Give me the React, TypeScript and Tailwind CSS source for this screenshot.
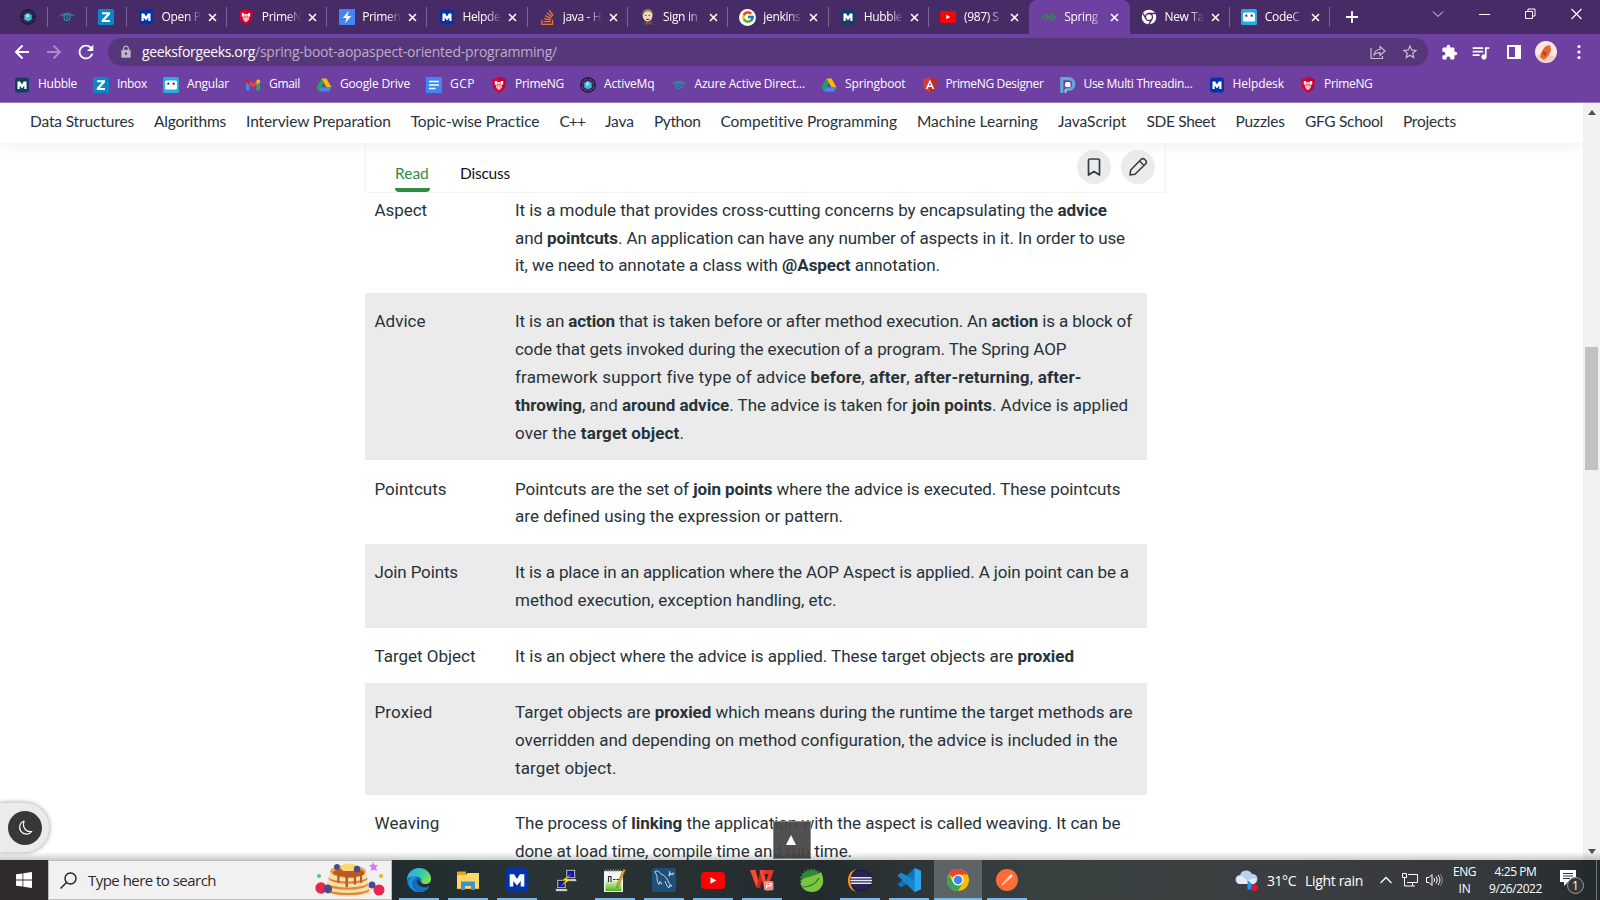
import React, { useLayoutEffect, useRef, type ReactNode } from "react";
import { FcGoogle } from "react-icons/fc";
import { SiStackoverflow } from "react-icons/si";
import { MdExtension, MdLock, MdQueueMusic, MdStarOutline, MdRefresh } from "react-icons/md";

/** Text tracked so that it fills the given advance width. */
function Fit({ w, className = "", children }: { w: number; className?: string; children: ReactNode }) {
  const ref = useRef<HTMLSpanElement>(null);
  useLayoutEffect(() => {
    const el = ref.current;
    if (!el) return;
    el.style.letterSpacing = "0px";
    const n = (el.textContent ?? "").length;
    const natural = el.getBoundingClientRect().width;
    el.style.letterSpacing = `${(w - natural) / n}px`;
  }, [w]);
  return (
    <span ref={ref} className={`inline-block whitespace-nowrap ${className}`}>
      {children}
    </span>
  );
}

/* ---------- favicons ---------- */

function IconM({ fill, size = 16 }: { fill: string; size?: number }) {
  return (
    <svg width={size} height={size} viewBox="0 0 16 16">
      <rect x="1" y="0.5" width="14" height="15" rx="3" fill={fill} />
      <path d="M3.500 12V4.500h2.700L8 7.400l1.800-2.900h2.700V12h-2.200V8.600L8 11.400 5.700 8.600V12z" fill="#fff" />
    </svg>
  );
}
const IconActive = () => (
  <svg width="16" height="16" viewBox="0 0 16 16" fill="none" stroke="#1b1530">
    <circle cx="8" cy="8" r="7.2" strokeWidth="1.2" />
    <circle cx="8" cy="8" r="5" />
    <path d="M8 0v16M0 8h16M2.500 2.500l11 11M13.500 2.500l-11 11" strokeWidth=".7" />
    <path d="M8 3.800 11.800 6v4.400L8 12.400l-3.800-2V6z" fill="#4bb8cf" stroke="#2a6c85" strokeWidth=".5" />
    <path d="M6 6l2-1 .8 2.500L7 9z" fill="#b9eef5" stroke="none" />
  </svg>
);
const IconEye = () => (
  <svg width="16" height="16" viewBox="0 0 16 16" fill="none" stroke="#1b9aa0">
    <path d="M.5 7.200C4 3.300 12 3.300 15.500 7.200M2.500 7C5 5.200 11 5.200 13.500 7" strokeWidth=".9" />
    <circle cx="8" cy="8.500" r="3" strokeWidth="1.100" />
    <circle cx="8" cy="8.500" r="1" fill="#1b9aa0" stroke="none" />
  </svg>
);
const IconZ = () => (
  <svg width="16" height="16" viewBox="0 0 16 16">
    <rect width="16" height="16" rx="1.500" fill="#0a87c4" />
    <path d="M4 3.200h8v2L6.900 11H12v2H3.800v-2L9 5.200H4z" fill="#fff" />
  </svg>
);
const IconShield = () => (
  <svg width="16" height="16" viewBox="0 0 16 16">
    <path d="M8 0l6.800 2.300-1 9L8 16l-5.800-4.700-1-9z" fill="#dd0031" />
    <path d="M8 0l6.800 2.300-1 9L8 16z" fill="#c3002f" />
    <path d="M3.800 4h2l.7 1h3l.7-1h2v3.500l-1.500 1v2.300L9 12.800H7l-1.700-2V8.500l-1.500-1z" fill="#fff" />
    <path d="M6.900 5v7.500M9.100 5v7.500M4 7.900h8" stroke="#d0102f" strokeWidth=".6" />
  </svg>
);
const IconBolt = () => (
  <svg width="16" height="16" viewBox="0 0 16 16">
    <rect width="16" height="16" rx="1" fill="#4285f4" />
    <path d="M9.800 1.800 3.800 9H7.500L6.200 14.200 12.300 7H8.500z" fill="#fff" />
  </svg>
);
const IconStack = () => <SiStackoverflow size={15} color="#e8762c" />;
const IconJenkins = () => (
  <svg width="16" height="16" viewBox="0 0 16 16">
    <path d="M2.500 16c0-3 1.500-4.500 3-4.500h5c2 0 3.500 2 3.500 4.500z" fill="#3d4a55" />
    <ellipse cx="7.600" cy="6.600" rx="4.900" ry="6" fill="#efd9b8" />
    <path d="M2.600 8C1.500 2 5 .3 8 .3c4 .2 5.500 2.700 4.700 7.200C12 4 10.800 2.200 8 2.200 5 2.200 3.600 4 2.600 8z" fill="#8f8468" />
    <path d="M5 6.500h1.500M8.500 6.500H10M6 10c1 .8 2.500.8 3.500 0" stroke="#3b2b20" strokeWidth=".8" />
    <path d="m6 13 2.500 1L11 12.800v2.600l-2.500-.8L6 15.600z" fill="#d33833" />
  </svg>
);
const IconTube = ({ w = 16, h = 12 }: { w?: number; h?: number }) => (
  <svg width={w} height={h} viewBox="0 0 16 12" preserveAspectRatio="none">
    <rect width="16" height="12" rx="2.500" fill="#f00" />
    <path d="M6.300 3.700v4.600L10.300 6z" fill="#fff" />
  </svg>
);
const IconGoogle = () => (
  <div className="flex size-[17px] items-center justify-center rounded-full bg-white">
    <FcGoogle size={14} />
  </div>
);
const IconGfg = () => (
  <svg width="16" height="16" viewBox="0 0 16 16" fill="none" stroke="#2f8d46" strokeWidth="1.200">
    <path d="M2 5.800c3-.8 5 .3 5 2.200s-1.200 2.800-2.800 2.800S1.500 9.800 1.500 8H14.500c0 1.800-1.100 2.800-2.700 2.800S9 9.900 9 8s2-3 5-2.200" />
  </svg>
);
const IconChromeMono = () => (
  <svg width="16" height="16" viewBox="0 0 16 16">
    <circle cx="8" cy="8" r="7.300" fill="#fff" />
    <circle cx="8" cy="8" r="3.500" fill="#fff" stroke="#472b66" strokeWidth="1.300" />
    <path d="M8 4.500h6.500M5 9.800 1.800 4.200M11 9.800 7.800 15.300" stroke="#472b66" strokeWidth="1.300" />
  </svg>
);
const IconRobot = () => (
  <svg width="16" height="16" viewBox="0 0 16 16">
    <rect width="16" height="16" rx="1.500" fill="#29abe2" />
    <rect x="2" y="3.500" width="12" height="9" rx="1.500" fill="#fff" />
    <path d="M4.300 7.200 5.300 5.600 6.300 7.200zM9.700 7.200l1-1.600 1 1.600z" fill="#222" stroke="#222" strokeWidth=".6" />
  </svg>
);
const IconGmail = () => (
  <svg width="16" height="16" viewBox="0 0 16 16">
    <path d="M1 3.500 4.500 6v7.500H2a1 1 0 0 1-1-1z" fill="#4285f4" />
    <path d="M15 3.500 11.500 6v7.500H14a1 1 0 0 0 1-1z" fill="#34a853" />
    <path d="M4.500 3.800 8 6.500l3.500-2.700v4L8 10.500 4.500 7.800z" fill="#ea4335" />
    <path d="M1 4c0-1.600 1.700-2 2.700-1.200l.8.7v4.300L1 5.300z" fill="#c5221f" />
    <path d="M15 4c0-1.600-1.700-2-2.700-1.200l-.8.700v4.300L15 5.300z" fill="#fbbc04" />
  </svg>
);
const IconDrive = () => (
  <svg width="16" height="16" viewBox="0 0 16 16">
    <path d="M5.500 1.500 8 5.800 3 14.500.5 10.200z" fill="#1ea362" />
    <path d="M5.500 1.500h5l5 8.700h-5z" fill="#ffba00" />
    <path d="M5.500 10.200h10L13 14.500H3z" fill="#4688f4" />
  </svg>
);
const IconDoc = () => (
  <svg width="16" height="16" viewBox="0 0 16 16">
    <rect width="16" height="16" rx="1" fill="#4285f4" />
    <path d="M3 4.500h10M3 8h10M3 11.500h6.500" stroke="#fff" strokeWidth="1.600" />
  </svg>
);
const IconAngular = () => (
  <svg width="16" height="16" viewBox="0 0 16 16">
    <path d="M8 0l7.200 2.500-1.100 9.600L8 16l-6.100-3.900L.8 2.500z" fill="#d93a3a" />
    <path d="M8 0l7.200 2.500-1.100 9.600L8 16z" fill="#b52e31" />
    <path d="m8 2.500 4.300 9.600h-1.700l-.9-2.200H6.300l-.9 2.200H3.700zM8 5.700 6.900 8.500h2.200z" fill="#fff" />
  </svg>
);
const IconP = () => (
  <svg width="16" height="16" viewBox="0 0 16 16">
    <path d="M1.800 16V1.700h6.700a5.300 5.300 0 0 1 0 10.600H6" fill="none" stroke="#62a8dc" strokeWidth="3.200" />
    <rect x="5" y="5" width="5.500" height="5" rx="1.500" fill="#fff" />
    <path d="M5.500 12v4" stroke="#8fc6ec" strokeWidth="2" />
  </svg>
);

const pinned = [<IconActive key="a" />, <IconEye key="e" />, <IconZ key="z" />];

const tabs: { icon: ReactNode; title: string; active?: boolean; sep?: boolean }[] = [
  { icon: <IconM fill="#0633a8" />, title: "Open P", sep: true },
  { icon: <IconShield />, title: "PrimeN", sep: true },
  { icon: <IconBolt />, title: "Primen", sep: true },
  { icon: <IconM fill="#0633a8" />, title: "Helpde", sep: true },
  { icon: <IconStack />, title: "java - H", sep: true },
  { icon: <IconJenkins />, title: "Sign in", sep: true },
  { icon: <IconGoogle />, title: "jenkins", sep: true },
  { icon: <IconM fill="#123f66" />, title: "Hubble", sep: true },
  { icon: <IconTube />, title: "(987) S" },
  { icon: <IconGfg />, title: "Spring", active: true },
  { icon: <IconChromeMono />, title: "New Ta", sep: true },
  { icon: <IconRobot />, title: "CodeC", sep: true },
];

const bookmarks: [ReactNode, string, number][] = [
  [<IconM fill="#123f66" />, "Hubble", 39],
  [<IconZ />, "Inbox", 30],
  [<IconRobot />, "Angular", 42],
  [<IconGmail />, "Gmail", 31],
  [<IconDrive />, "Google Drive", 70],
  [<IconDoc />, "GCP", 25],
  [<IconShield />, "PrimeNG", 49],
  [<IconActive />, "ActiveMq", 50.5],
  [<IconEye />, "Azure Active Direct...", 110.5],
  [<IconDrive />, "Springboot", 60.5],
  [<IconAngular />, "PrimeNG Designer", 98],
  [<IconP />, "Use Multi Threadin...", 109],
  [<IconM fill="#0633a8" />, "Helpdesk", 51.5],
  [<IconShield />, "PrimeNG", 48.5],
];

function TabStrip() {
  return (
    <div className="flex h-[34px] shrink-0 items-center bg-[#472b66] pl-[9px]">
      {pinned.map((icon, i) => (
        <div key={i} className="flex h-full w-[39.200px] items-center">
          <div className="flex flex-1 justify-center">{icon}</div>
          <div className="h-5 w-px bg-[#7d6696]" />
        </div>
      ))}
      {tabs.map((t) => (
        <div
          key={t.title}
          className={`flex h-full w-[100.300px] items-center pl-[11px] ${t.active ? "rounded-t-lg bg-[#6e40a1]" : ""}`}
        >
          <div className="flex w-[17px] justify-center">{t.icon}</div>
          <div className="ml-[7px] w-[41px] text-[12px] tracking-[-0.350px] whitespace-nowrap text-white [mask-image:linear-gradient(to_right,#000_60%,transparent_96%)]">
            {t.title}
          </div>
          <svg className="ml-[5px] shrink-0" width="9" height="9" viewBox="0 0 9 9">
            <path d="M1 1l7 7M8 1 1 8" stroke="#fff" strokeWidth="1.600" />
          </svg>
          {t.sep && <div className="ml-auto h-5 w-px bg-[#7d6696]" />}
        </div>
      ))}
      <svg className="ml-4" width="12" height="12" viewBox="0 0 12 12">
        <path d="M6 0v12M0 6h12" stroke="#fff" strokeWidth="1.800" />
      </svg>
      <div className="ml-auto flex items-center gap-[35px] pr-[18px] pb-[6px]">
        <svg width="12" height="12" viewBox="0 0 12 12" fill="none" stroke="#e8e2ef">
          <path d="m1 3.500 5 5 5-5" />
        </svg>
        <svg width="11" height="12" viewBox="0 0 11 12" stroke="#fff">
          <path d="M0 6.500h11" />
        </svg>
        <svg width="11" height="12" viewBox="0 0 11 12" fill="none" stroke="#fff">
          <path d="M.5 3.500h7v7h-7zM3 3V1h7v7H8" />
        </svg>
        <svg width="11" height="12" viewBox="0 0 11 12" stroke="#fff" strokeWidth="1.100">
          <path d="m.5 1 10 10M10.500 1l-10 10" />
        </svg>
      </div>
    </div>
  );
}

function Toolbar() {
  return (
    <div className="flex h-[36px] shrink-0 items-center bg-[#6e40a1] pr-[15px] pl-[14px] text-white">
      <svg width="16" height="16" viewBox="0 0 16 16" fill="none" stroke="#fff" strokeWidth="2">
        <path d="M15 8H2.500M8.500 1.500 2 8l6.500 6.500" />
      </svg>
      <svg className="ml-4" width="16" height="16" viewBox="0 0 16 16" fill="none" stroke="#ab8cc8" strokeWidth="1.800">
        <path d="M1 8h12.500M7.500 1.500 14 8l-6.500 6.500" />
      </svg>
      <MdRefresh className="ml-[13px]" size={22} />
      <div className="ml-[11px] flex h-7 w-[1320px] items-center rounded-full bg-[#55377a] pr-[9px] pl-[11px]">
        <MdLock size={14} color="#bfb6c9" />
        <div className="ml-[9px] flex text-[14px] leading-none">
          <Fit w={113}>geeksforgeeks.org</Fit>
          <Fit w={302} className="text-[#bbaecb]">/spring-boot-aopaspect-oriented-programming/</Fit>
        </div>
        <svg className="ml-auto" width="16" height="16" viewBox="0 0 16 16" fill="none" stroke="#c6bdd1" strokeWidth="1.200">
          <path d="M1 4v10.500h11.500V12M4 11c.5-4 3-5.500 6-5.500V2.500L15 7l-5 4.500V8.600C7.500 8.500 5.500 9 4 11z" />
        </svg>
        <MdStarOutline className="ml-[15px]" size={18} color="#c6bdd1" />
      </div>
      <MdExtension className="ml-[13px]" size={17} />
      <MdQueueMusic className="ml-[12px]" size={21} />
      <svg className="ml-[16px]" width="14" height="14" viewBox="0 0 14 14">
        <path d="M1 1h12v12H1z" fill="none" stroke="#fff" strokeWidth="2" />
        <path d="M8 0h6v14H8z" fill="#fff" />
      </svg>
      <svg className="ml-[14px]" width="22" height="22" viewBox="0 0 22 22">
        <circle cx="11" cy="11" r="11" fill="#fbe6e0" />
        <path d="M1 15q6-3 12-1t8 0a11 11 0 0 1-20 1z" fill="#f6cdc0" />
        <path d="m6 12 3-5 2-2 4-1 1 5-2 5-3 3-2 2-4-3z" fill="#e8662a" />
        <path d="m8 10 3.500 3M7.500 12l3 2.500" stroke="#a3400f" strokeWidth="1.100" />
      </svg>
      <svg className="ml-auto" width="12" height="16" viewBox="0 0 12 16" fill="#fff">
        <circle cx="6" cy="2.500" r="1.600" />
        <circle cx="6" cy="8" r="1.600" />
        <circle cx="6" cy="13.500" r="1.600" />
      </svg>
    </div>
  );
}

function Bookmarks() {
  return (
    <div className="flex h-[33px] shrink-0 items-center gap-4 border-b border-[#9a7cbd] bg-[#6e40a1] pb-[3px] pl-[14px] text-[12px] text-white">
      {bookmarks.map(([icon, label, w], i) => (
        <div key={i} className="flex items-center gap-2">
          <div className="w-4">{icon}</div>
          <Fit w={w} className="leading-4 mb-px">{label}</Fit>
        </div>
      ))}
    </div>
  );
}

/* ---------- page ---------- */

const navItems: [string, number][] = [
  ["Data Structures", 104],
  ["Algorithms", 72],
  ["Interview Preparation", 145],
  ["Topic-wise Practice", 129],
  ["C++", 25.5],
  ["Java", 29],
  ["Python", 46.5],
  ["Competitive Programming", 177],
  ["Machine Learning", 121],
  ["JavaScript", 68.5],
  ["SDE Sheet", 69],
  ["Puzzles", 49.5],
  ["GFG School", 78],
  ["Projects", 53],
];

const B = ({ children }: { children: ReactNode }) => <strong className="font-bold">{children}</strong>;

const rows: { term: string; tw: number; lines: [ReactNode, number][] }[] = [
  {
    term: "Aspect",
    tw: 52.5,
    lines: [
      [<>It is a module that provides cross-cutting concerns by encapsulating the <B>advice</B></>, 592],
      [<>and <B>pointcuts</B>. An application can have any number of aspects in it. In order to use</>, 610],
      [<>it, we need to annotate a class with <B>@Aspect</B> annotation.</>, 425],
    ],
  },
  {
    term: "Advice",
    tw: 51,
    lines: [
      [<>It is an <B>action</B> that is taken before or after method execution. An <B>action</B> is a block of</>, 617],
      [<>code that gets invoked during the execution of a program. The Spring AOP</>, 551.5],
      [<>framework support five type of advice <B>before</B>, <B>after</B>, <B>after-returning</B>, <B>after-</B></>, 566],
      [<><B>throwing</B>, and <B>around advice</B>. The advice is taken for <B>join points</B>. Advice is applied</>, 613],
      [<>over the <B>target object</B>.</>, 169],
    ],
  },
  {
    term: "Pointcuts",
    tw: 72,
    lines: [
      [<>Pointcuts are the set of <B>join points</B> where the advice is executed. These pointcuts</>, 605.5],
      [<>are defined using the expression or pattern.</>, 327.5],
    ],
  },
  {
    term: "Join Points",
    tw: 83.5,
    lines: [
      [<>It is a place in an application where the AOP Aspect is applied. A join point can be a</>, 614],
      [<>method execution, exception handling, etc.</>, 321.5],
    ],
  },
  {
    term: "Target Object",
    tw: 101,
    lines: [[<>It is an object where the advice is applied. These target objects are <B>proxied</B></>, 559]],
  },
  {
    term: "Proxied",
    tw: 58,
    lines: [
      [<>Target objects are <B>proxied</B> which means during the runtime the target methods are</>, 617.5],
      [<>overridden and depending on method configuration, the advice is included in the</>, 602],
      [<>target object.</>, 101.5],
    ],
  },
  {
    term: "Weaving",
    tw: 65,
    lines: [
      [<>The process of <B>linking</B> the application with the aspect is called weaving. It can be</>, 605.5],
      [<>done at load time, compile time and run time.</>, 337],
    ],
  },
];

function Article() {
  return (
    <div className="relative flex min-h-0 flex-1 bg-white">
      <main className="min-w-0 flex-1 overflow-hidden text-[#273239]">
        <nav className="relative flex h-10 items-center gap-5 bg-white pb-[2px] pl-[30px] font-['Lato',sans-serif] text-[15.500px] shadow-[0_4px_14px_rgba(0,0,0,0.06)]">
          {navItems.map(([label, w]) => (
            <Fit key={label} w={w}>{label}</Fit>
          ))}
        </nav>
        <div className="ml-[365px] flex h-[50px] w-[801px] justify-between border-x border-b border-[#f3f3f3] pr-[10px] pl-[29px] font-['Lato',sans-serif] text-[15.500px]">
          <div className="flex items-end gap-[30px]">
            <div className="flex h-[31px] flex-col justify-between text-[#2f8d46]">
              <Fit w={35} className="leading-[24px]">Read</Fit>
              <div className="h-1 w-[35px] rounded-b bg-[#2f8d46]" />
            </div>
            <div className="flex h-[31px] flex-col text-[#111]">
              <Fit w={50} className="leading-[24px]">Discuss</Fit>
            </div>
          </div>
          <div className="flex gap-[10px] pt-[7px]">
            <div className="flex size-[34px] items-center justify-center rounded-full bg-[#ebebeb]">
              <svg width="14" height="18" viewBox="0 0 14 18" fill="none" stroke="#333c42" strokeWidth="1.700">
                <path d="M1.500 17V2.500a1.500 1.500 0 0 1 1.500-1.500h8a1.500 1.500 0 0 1 1.500 1.500V17L7 13.500z" strokeLinejoin="round" />
              </svg>
            </div>
            <div className="flex size-[34px] items-center justify-center rounded-full bg-[#ebebeb]">
              <svg width="20" height="20" viewBox="0 0 20 20" fill="none" stroke="#333c42" strokeWidth="1.600" strokeLinejoin="round">
                <path d="M2 18l.7-5L13.200 2.300a2.300 2.300 0 0 1 3.300 0l1.200 1.200a2.300 2.300 0 0 1 0 3.300L7 17.300zM11.500 4l4.500 4.500" />
              </svg>
            </div>
          </div>
        </div>
        <div className="ml-[365px] w-[782px] pt-[3.700px] font-['Roboto',sans-serif] text-[17px] leading-[27.900px]">
          {rows.map((r, i) => (
            <div
              key={r.term}
              className={`flex pb-[12.600px] pl-[9.500px] ${i > 0 ? "pt-[15.300px]" : ""} ${i % 2 ? "bg-[#ebebeb]" : ""}`}
            >
              <div className="w-[140.500px] shrink-0">
                <Fit w={r.tw}>{r.term}</Fit>
              </div>
              <div>
                {r.lines.map(([text, w], j) => (
                  <div key={j} className="h-[27.900px]">
                    <Fit w={w}>{text}</Fit>
                  </div>
                ))}
              </div>
            </div>
          ))}
        </div>
      </main>
      <div className="flex w-[17px] shrink-0 flex-col items-center justify-between bg-[#f1f1f1] pt-[7px] pb-[6px]">
        <svg width="8" height="5" viewBox="0 0 8 5"><path d="M0 5 4 0l4 5z" fill="#505050" /></svg>
        <div className="mb-[379px] mt-auto h-[123px] w-[13px] bg-[#c1c1c1]" />
        <svg width="8" height="5" viewBox="0 0 8 5"><path d="M0 0h8L4 5z" fill="#505050" /></svg>
      </div>
      <div className="absolute bottom-[7px] left-0 flex h-[51px] w-[49.500px] items-center rounded-r-full border border-l-0 border-[#d6d6d6] bg-[#ebebeb] pl-[7.500px] shadow-[0_0_4px_rgba(0,0,0,0.3)]">
        <div className="flex size-[34px] items-center justify-center rounded-full bg-[#38383a]">
          <svg width="16" height="16" viewBox="0 0 16 16" fill="none" stroke="#fff" strokeWidth="1.200" strokeLinejoin="round">
            <path d="M7 1A6.800 6.800 0 1 0 14.800 11.500C9.500 12.500 5 8 7 1z" />
          </svg>
        </div>
      </div>
      <div className="absolute bottom-px left-[773px] flex h-[38px] w-[38px] items-center justify-center border border-[#8a8a8a] bg-[#484848]/95">
        <svg className="mr-[2px]" width="10" height="10" viewBox="0 0 10 10"><path d="M0 10 5 0l5 10z" fill="#fff" /></svg>
      </div>
      <div className="absolute bottom-0 left-0 h-[8px] w-full bg-gradient-to-t from-black/20 to-transparent" />
    </div>
  );
}

/* ---------- taskbar ---------- */

const Edge = () => (
  <svg width="24" height="24" viewBox="0 0 24 24">
    <defs>
      <linearGradient id="edgeTop" x1="0" x2="1" y1="0" y2=".5">
        <stop offset="0" stopColor="#2aa5e0" />
        <stop offset=".6" stopColor="#35c9b6" />
        <stop offset="1" stopColor="#7be04a" />
      </linearGradient>
    </defs>
    <circle cx="12" cy="12" r="12" fill="#0f6cbd" />
    <path d="M0 12C0 5 5.500 0 12 0s12 5 12 10.500c0 4-3 6-6 6-2.500 0-4-1-4-2.500 1-1 1-5-3.500-5.500C6 8 1 9 0 12z" fill="url(#edgeTop)" />
    <path d="M10 9c-3 2-3.500 6-1 9 3 3.500 8.500 4 13 1-2 3.500-6.500 5.500-11 5C6 23.500 2 19 1.500 15 1 11 5 8 10 9z" fill="#1b8fe0" />
    <path d="M10.500 11c-1.500 3 .5 7 5 8 3 .7 5.500 0 7.500-1.500l2 2-1-5.500c-2 2.500-9 3-10 0z" fill="#232e31" />
    <path d="M9 10c-2.500 2.500-2 7 1 9.500 3.500 2.700 8.500 2.500 12.500-.5-3 5-9 6-13 4C4 20 4 12 9 10z" fill="#1468b8" />
  </svg>
);
const Explorer = () => (
  <svg width="22" height="19" viewBox="0 0 22 19">
    <path d="M0 1.500A1 1 0 0 1 1 .5h8V3h13v15H0z" fill="#e9a41c" />
    <path d="M0 4h9l1.500-2H22v15.500H0z" fill="#ffd765" />
    <path d="M4 19v-8.500h14V19h-4v-4H8v4z" fill="#3b93d6" />
  </svg>
);
const Putty = () => (
  <svg width="22" height="23" viewBox="0 0 22 23">
    <path d="M11 .5h9.500v9H11zM9.500 9.500H21l1 3H9zM2 10.500h9v9H2zM.5 19.500H12l1 3H.500z" fill="#cfcfcf" stroke="#111" strokeWidth=".5" />
    <path d="M12.500 2h6.500v6h-6.500zM3.500 12H9.500v6h-6z" fill="#0a12e0" stroke="#111" strokeWidth=".5" />
    <path d="m16 5-9 6.500h4L6 17l10-7h-4.500z" fill="#ffef1a" stroke="#6b6400" strokeWidth=".3" />
  </svg>
);
const Notepad = () => (
  <svg width="24" height="25" viewBox="0 0 24 25">
    <defs>
      <linearGradient id="noteGreen" x1="0" x2="0" y1="0" y2="1">
        <stop offset="0" stopColor="#e9f6d5" />
        <stop offset="1" stopColor="#4fb41a" />
      </linearGradient>
    </defs>
    <path d="M1 3h19v21H1z" fill="#f5f5f5" />
    <path d="M2.500 12h16v11h-16z" fill="url(#noteGreen)" />
    <path d="M2 2.500h16" stroke="#888" strokeWidth="2" strokeDasharray="1.500 1" />
    <path d="M5.500 8v6M5.500 8.500h2.500V14M10 11.500h2.500M13.500 11.500h2.500" stroke="#333" strokeWidth="1.200" fill="none" />
    <path d="M22.500 2 16 17l-2 3 .2-4.500L20.500 1z" fill="#e7a92f" stroke="#7c5310" strokeWidth=".5" />
  </svg>
);
const Workbench = () => (
  <div className="flex size-6 items-center justify-center overflow-hidden rounded-[3px] bg-[#1f4f7a]">
    <svg width="24" height="24" viewBox="0 0 24 24" fill="none" stroke="#dbe7f0" strokeWidth=".9">
      <path d="M3 3.500c2.500-1.200 4.500.2 6 2.500 4 1.500 7 5 8 9.500l3 2.500-2.500-.3-.5 2.300c-1.500-1-3-4-4-7" />
      <path d="M3 3.500c.5 2 2 3.500 2 6 0 3 .5 5 2 7l1-3 2 3" />
      <path d="m16.500 8 2.500-2.500M17.500 3.300l.2 2.500 2.700.7 1.300-1.700" stroke="#b9cbdb" strokeWidth="1.500" />
    </svg>
  </div>
);
const Wps = () => (
  <svg width="24" height="22" viewBox="0 0 24 22">
    <path d="M0 1h5.500L10 18.500H6.500z" fill="#ff4a35" />
    <path d="M6.500 18.500 10.500 1h4L10 18.500z" fill="#d42318" />
    <path d="M9.500 1h4l2.500 12-2 5.500z" fill="#ff4a35" />
    <path d="M14 18.500 18.500 5H13l1-4h10l-6.500 17.500z" fill="#ee3124" />
    <rect x="14" y="12" width="9.500" height="9.500" rx="2" fill="#ee8a88" />
    <path d="M16.500 14.500h4.500v2.300h-4.500v2.500" stroke="#fff" strokeWidth="1.200" fill="none" />
  </svg>
);
const Spring = () => (
  <svg width="25" height="25" viewBox="0 0 25 25">
    <circle cx="12.500" cy="12.500" r="10.500" fill="#2f8a33" stroke="#2f8a33" strokeWidth="2.600" strokeDasharray="1.700 1.500" />
    <path d="M2 16C2 7 12 11 22 4c4 8 2.500 17-6 19.500C10 25 3 22 2 16z" fill="#7cc444" />
    <path d="M3.500 19c7 0 13-2.500 16.500-9" stroke="#2f7420" strokeWidth="1.200" fill="none" />
  </svg>
);
const Eclipse = () => (
  <svg width="24" height="23" viewBox="0 0 24 23">
    <path d="M8 0C2 2 0 7 0 11.500S2 21 8 23C4 20 2.500 16 2.500 11.500S4 3 8 0z" fill="#f7941e" />
    <circle cx="13" cy="11.500" r="10.300" fill="#2c2255" stroke="#1b1638" />
    <path d="M2.800 8.700h20.700M2.500 11.500h21.500M2.800 14.300h20.700" stroke="#e9e6f3" strokeWidth="1.500" />
  </svg>
);
const VsCode = () => (
  <svg width="24" height="24" viewBox="0 0 24 24">
    <path d="M17.500 0 24 3v5L4 19.500 0.500 16.500z" fill="#0d72b8" />
    <path d="M17.500 24 24 21v-5L4 4.500.5 7.500z" fill="#1588cf" />
    <path d="M17.500 0 24 2.800v18.400L17.500 24z" fill="#2ba6ef" />
  </svg>
);
const Chrome = () => (
  <svg width="22" height="22" viewBox="0 0 22 22">
    <circle cx="11" cy="11" r="11" fill="#fbbc05" />
    <path d="M11 11 1.500 5.500A11 11 0 0 1 20.500 5.500H11z" fill="#ea4335" />
    <path d="M1.500 5.500A11 11 0 0 0 11 22l4.800-8.300L11 11 6.200 13.700z" fill="#34a853" />
    <circle cx="11" cy="11" r="5.500" fill="#fff" />
    <circle cx="11" cy="11" r="4.300" fill="#4285f4" />
  </svg>
);
const Postman = () => (
  <svg width="22" height="22" viewBox="0 0 22 22">
    <circle cx="11" cy="11" r="11" fill="#ff6c37" />
    <path d="M5 17l2-3 7-8c1.500-1.500 3.500.3 2 2l-7 6z" fill="#fff" />
    <path d="m8 14 6-6" stroke="#ff6c37" strokeWidth=".6" />
  </svg>
);

const apps: { el: ReactNode; open: boolean; active?: boolean }[] = [
  { el: <Edge />, open: true },
  { el: <Explorer />, open: true },
  { el: <IconM fill="#0633a8" size={26} />, open: true },
  { el: <Putty />, open: false },
  { el: <Notepad />, open: true },
  { el: <Workbench />, open: true },
  { el: <IconTube w={24} h={17} />, open: true },
  { el: <Wps />, open: true },
  { el: <Spring />, open: false },
  { el: <Eclipse />, open: true },
  { el: <VsCode />, open: true },
  { el: <Chrome />, open: true, active: true },
  { el: <Postman />, open: true },
];

const Pancakes = () => (
  <svg width="70" height="36" viewBox="0 0 70 36">
    <ellipse cx="34" cy="30" rx="23" ry="5" fill="#f6e3c8" />
    <ellipse cx="33" cy="28" rx="21.500" ry="5.200" fill="#d98a3d" />
    <ellipse cx="33" cy="26" rx="21.500" ry="5" fill="#fbdfa8" />
    <ellipse cx="32.500" cy="22.500" rx="20.500" ry="5.200" fill="#d98a3d" />
    <ellipse cx="32.500" cy="20.500" rx="20.500" ry="5" fill="#fbdfa8" />
    <ellipse cx="33" cy="16.500" rx="19.500" ry="5.200" fill="#d98a3d" />
    <ellipse cx="33" cy="14.500" rx="19.500" ry="5" fill="#fbdfa8" />
    <ellipse cx="33" cy="9.500" rx="18" ry="6.500" fill="#e8a552" />
    <path d="M18 10c4-4 26-5 31 0 1 2-1 3-2 4v6c-.7 1.500-2 1-2-.5V14l-4 1v7c-.7 1.500-2.200 1-2.200-.5V15.500H33v9c-.7 1.500-2.500 1-2.500-.5v-9l-6-1v6c-.7 1.500-2.200 1-2.200-.5v-6c-3-1-5-2-4.300-3.500z" fill="#b8591f" />
    <path d="M25 5c3-4 14-5 18 0l-5 4H28z" fill="#ffd76e" />
    <circle cx="22" cy="5" r="3" fill="#4a4a8c" />
    <circle cx="42" cy="7" r="3.200" fill="#4a4a8c" />
    <circle cx="6" cy="26" r="5.700" fill="#e3274f" />
    <circle cx="13" cy="27" r="4.200" fill="#4a4a8c" />
    <circle cx="57" cy="23" r="3.500" fill="#4a4a8c" />
    <circle cx="64" cy="28" r="5.500" fill="#e3274f" />
    <circle cx="4" cy="14" r="2.100" fill="#4fd06f" />
    <circle cx="66" cy="14" r="2.100" fill="#fbb216" />
    <path d="m58 0 1.500 3L63 3l-2 2.500 1 3.500-3-1.500L56 9l.3-3.500L54 3l3-.3z" fill="#d278ff" />
  </svg>
);

function Taskbar() {
  return (
    <div className="flex h-10 shrink-0 bg-[linear-gradient(to_right,#302a2b_0px,#302a2b_48px,#202c2e_391px,#2b3435_560px,#232b2e_820px,#394140_1030px,#3b3e40_1300px,#35393c_1480px,#22292c_1600px)] font-['Open_Sans','Noto_Sans',sans-serif] text-white">
      <div className="flex w-12 items-center justify-center">
        <svg width="16" height="16" viewBox="0 0 16 16" fill="#fff">
          <path d="M0 2.300 6.500 1.400V7.600H0zM7.300 1.300 16 0v7.600H7.300zM0 8.400h6.500v6.200L0 13.700zM7.300 8.400H16V16l-8.700-1.300z" />
        </svg>
      </div>
      <div className="flex w-[344px] items-center border border-[#bcbcbc] bg-[#f1f1f1] pr-[6px] pl-[11px]">
        <svg width="17" height="17" viewBox="0 0 17 17" fill="none" stroke="#222" strokeWidth="1.400">
          <circle cx="10.500" cy="6.500" r="5.500" />
          <path d="m6.500 10.500-6 6" />
        </svg>
        <Fit w={128} className="ml-[11px] text-[15px] leading-none text-[#2b2b2b]">Type here to search</Fit>
        <div className="ml-auto"><Pancakes /></div>
      </div>
      <div className="ml-[3px] flex gap-px">
        {apps.map((a, i) => (
          <div key={i} className={`flex w-12 flex-col items-center ${a.active ? "bg-[#5e6466]" : ""}`}>
            <div className="flex h-[38px] items-center pt-[2px]">{a.el}</div>
            {a.open && <div className={`h-[2px] bg-[#76b9ed] ${a.active ? "w-12" : "w-10"}`} />}
          </div>
        ))}
      </div>
      <div className="ml-auto flex items-center">
        <svg width="24" height="22" viewBox="0 0 24 22">
          <path d="M5 15a4.500 4.500 0 0 1 0-9 6.500 6.500 0 0 1 12-1 5 5 0 0 1 1 10z" fill="#b9d0f0" />
          <path d="M5 15a4 4 0 0 1 1-8c3 0 4 4 7 4s5-3 8-1c0 3-1.500 5-3 5z" fill="#e3ecfa" />
          <path d="M12.500 11c2.500 2 5 4 5 6.500s-2 3-5 3z" fill="#1f9de8" />
          <circle cx="19.500" cy="18.500" r="3.500" fill="#dc143c" />
        </svg>
        <Fit w={29} className="ml-[8px] text-[14px]">31°C</Fit>
        <Fit w={58} className="ml-[9px] text-[14px]">Light rain</Fit>
        <svg className="ml-[17px]" width="12" height="8" viewBox="0 0 12 8" fill="none" stroke="#fff" strokeWidth="1.300">
          <path d="m.5 7 5.500-5.500L11.500 7" />
        </svg>
        <svg className="ml-[10px]" width="16" height="14" viewBox="0 0 16 14" fill="none" stroke="#fff">
          <path d="M6 1.500h9.500v8H5M10.500 9.500V13M5 13h8M.5.500h4v4h-4zM2.500 4.500V13H5" />
        </svg>
        <svg className="ml-[8px]" width="17" height="14" viewBox="0 0 17 14" fill="none" stroke="#fff">
          <path d="M.5 4.500H3L6 1.500v11L3 9.500H.5zM8 5q1.500 2 0 4M10 3.500q3 3.500 0 7" />
          <path d="M12 2q4 5 0 10" stroke="#fff" />
          <path d="M14 1q5 6 0 12" stroke="#888" />
        </svg>
        <div className="ml-[10px] flex w-[23px] flex-col items-center gap-[5px] text-[12px] leading-[12px]">
          <Fit w={23}>ENG</Fit>
          <Fit w={12}>IN</Fit>
        </div>
        <div className="ml-[13px] flex w-[53px] flex-col items-center gap-[5px] text-[12px] leading-[12px]">
          <Fit w={42}>4:25 PM</Fit>
          <Fit w={53}>9/26/2022</Fit>
        </div>
        <svg className="mt-[4px] ml-[17px]" width="26" height="26" viewBox="0 0 26 26">
          <path d="M1 1h16v12H9l-4 4v-4H1z" fill="#fff" />
          <path d="M4 4.500h10M4 7h10M4 9.500h7" stroke="#333" />
          <circle cx="16.500" cy="16.500" r="8" fill="#33383a" stroke="#9a9a9a" />
          <text x="16.500" y="21" textAnchor="middle" fontSize="12" fill="#fff">1</text>
        </svg>
        <div className="mr-[3px] ml-[11px] h-10 w-px bg-[#777]" />
      </div>
    </div>
  );
}

export default function App() {
  return (
    <div className="flex h-[900px] w-[1600px] flex-col overflow-hidden font-['Open_Sans','Noto_Sans',sans-serif]">
      <TabStrip />
      <Toolbar />
      <Bookmarks />
      <Article />
      <Taskbar />
    </div>
  );
}
